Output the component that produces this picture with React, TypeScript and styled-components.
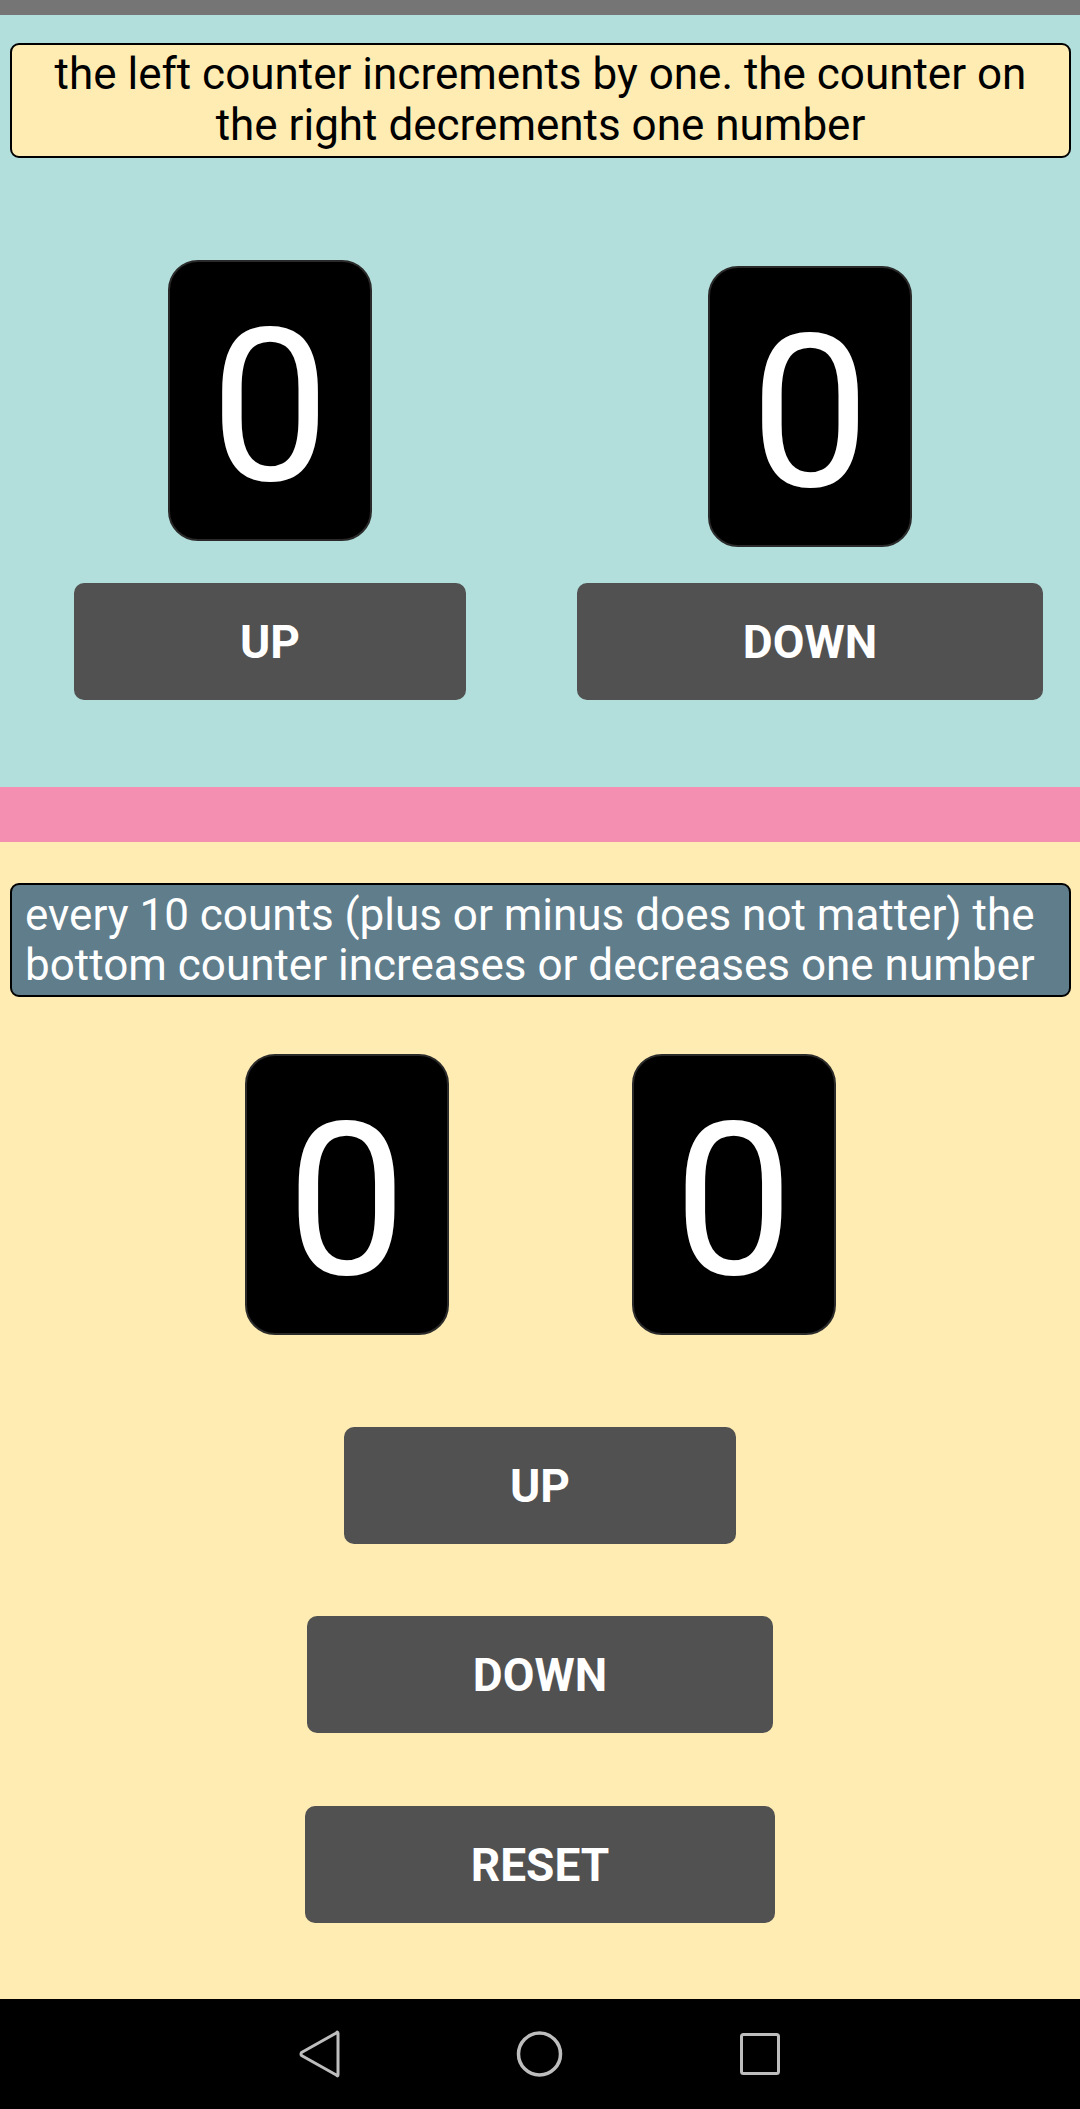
import React from "react";
import styled, { createGlobalStyle } from "styled-components";

const Global = createGlobalStyle`
  html, body { margin: 0; padding: 0; }
  body { font-family: Roboto, "Noto Sans", Arial, sans-serif; }
`;

const Screen = styled.div`
  width: 1080px;
  height: 2109px;
  display: flex;
  flex-direction: column;
  overflow: hidden;
`;

const StatusBar = styled.div`
  height: 15px;
  background: #757575;
  flex-shrink: 0;
`;

const TopSection = styled.section`
  height: 772px;
  background: #b2dfdb;
  display: flex;
  flex-direction: column;
  padding-top: 28px;
  box-sizing: border-box;
`;

const Divider = styled.div`
  height: 55px;
  background: #f48fb1;
  flex-shrink: 0;
`;

const BottomSection = styled.section`
  flex: 1;
  background: #ffecb3;
  display: flex;
  flex-direction: column;
  align-items: center;
  padding-top: 41px;
  box-sizing: border-box;
`;

const Note = styled.div<{ $variant: "light" | "dark" }>`
  box-sizing: border-box;
  width: 1061px;
  margin: 0 10px;
  align-self: flex-start;
  border: 2px solid #000;
  border-radius: 9px;
  padding: ${(p) => (p.$variant === "light" ? "4px 30px 5px" : "5px 13px")};
  font-size: 44px;
  line-height: ${(p) => (p.$variant === "light" ? "51px" : "50px")};
  text-align: ${(p) => (p.$variant === "light" ? "center" : "left")};
  background: ${(p) => (p.$variant === "light" ? "#ffecb3" : "#607d8b")};
  color: ${(p) => (p.$variant === "light" ? "#000" : "#fff")};
`;

const PairGrid = styled.div`
  display: grid;
  grid-template-columns: 1fr 1fr;
  justify-items: center;
  align-items: start;
  row-gap: 36px;
  margin-top: 102px;
`;

const CardRow = styled.div`
  display: flex;
  justify-content: center;
  gap: 183px;
  margin-top: 57px;
`;

const Card = styled.div<{ $offset?: number }>`
  box-sizing: border-box;
  width: 204px;
  height: 281px;
  margin-top: ${(p) => p.$offset ?? 0}px;
  background: #000;
  border: 2px solid #2a2a2a;
  border-radius: 30px;
  display: flex;
  align-items: center;
  justify-content: center;
  padding-top: 14px;
  color: #fff;
  font-size: 213px;
  line-height: 1;
  font-weight: 400;
`;

const ActionButton = styled.button<{ $gap?: number }>`
  box-sizing: border-box;
  height: 117px;
  padding: 0 166px;
  margin-top: ${(p) => p.$gap ?? 0}px;
  border: none;
  border-radius: 10px;
  background: #515151;
  color: #fff;
  font-family: Roboto, "Noto Sans", Arial, sans-serif;
  font-weight: 700;
  font-size: 46px;
  line-height: 1;
  white-space: nowrap;
  cursor: pointer;
`;

const NavBar = styled.nav`
  height: 110px;
  flex-shrink: 0;
  background: #000;
  display: flex;
  justify-content: center;
  align-items: center;
  gap: 172px;
`;

const NavIcon = styled.svg`
  width: 48px;
  height: 48px;
  display: block;
`;

export default function App() {
  return (
    <Screen>
      <Global />
      <StatusBar />
      <TopSection>
        <Note $variant="light">
          the left counter increments by one. the counter on the right decrements one number
        </Note>
        <PairGrid>
          <Card>0</Card>
          <Card $offset={6}>0</Card>
          <ActionButton>UP</ActionButton>
          <ActionButton>DOWN</ActionButton>
        </PairGrid>
      </TopSection>
      <Divider />
      <BottomSection>
        <Note $variant="dark">
          every 10 counts (plus or minus does not matter) the bottom counter increases or decreases one number
        </Note>
        <CardRow>
          <Card>0</Card>
          <Card>0</Card>
        </CardRow>
        <ActionButton $gap={92}>UP</ActionButton>
        <ActionButton $gap={72}>DOWN</ActionButton>
        <ActionButton $gap={73}>RESET</ActionButton>
      </BottomSection>
      <NavBar>
        <NavIcon viewBox="0 0 48 48">
          <path
            d="M42 3.5 V44.5 Q42 47 40.3 45 L5.5 25.5 Q4.5 24 5.5 22.5 L40.3 3 Q42 1 42 3.5 Z"
            fill="none"
            stroke="#bdbdbd"
            strokeWidth="3"
            strokeLinejoin="round"
          />
        </NavIcon>
        <NavIcon viewBox="0 0 48 48">
          <circle cx="23.5" cy="24" r="21" fill="none" stroke="#bdbdbd" strokeWidth="3.5" />
        </NavIcon>
        <NavIcon viewBox="0 0 48 48">
          <rect x="5.5" y="4.5" width="37" height="39" rx="2" fill="none" stroke="#bdbdbd" strokeWidth="3" />
        </NavIcon>
      </NavBar>
    </Screen>
  );
}
